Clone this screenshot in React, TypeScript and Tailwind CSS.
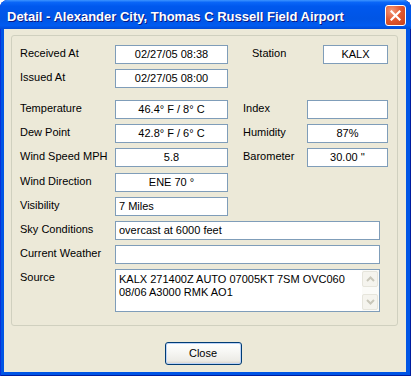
import React from 'react';

const rows = {
  font: "font-['Liberation_Sans',Arial,sans-serif]",
};

function Box({ className, children, left }: { className: string; children?: React.ReactNode; left?: boolean }) {
  return (
    <div
      className={`h-[19px] shrink-0 border border-[#7F9DB9] bg-white leading-[17px] whitespace-nowrap overflow-hidden ${
        left ? 'pl-[3px] text-left' : 'text-center'
      } ${className}`}
    >
      {children}
    </div>
  );
}

function Label({ className, children }: { className: string; children: React.ReactNode }) {
  return <div className={`shrink-0 pt-[2px] leading-[13px] whitespace-nowrap ${className}`}>{children}</div>;
}

function Chevron({ up }: { up?: boolean }) {
  return (
    <svg width="9" height="6" viewBox="0 0 9 6" className="block">
      <path
        d={up ? 'M1 5 L4.5 1.5 L8 5' : 'M1 1 L4.5 4.5 L8 1'}
        fill="none"
        stroke="#C9C7BA"
        strokeWidth="2"
      />
    </svg>
  );
}

export default function App() {
  return (
    <div
      className={`w-[411px] h-[376px] flex flex-col rounded-t-[8px] overflow-hidden bg-[#0055E5] text-[11px] text-black ${rows.font} shadow-[inset_1px_0_0_#0831D9,inset_-1px_0_0_#001EA0,inset_0_-1px_0_#001EA0]`}
    >
      {/* title bar */}
      <div className="h-[29px] shrink-0 flex items-start justify-between pl-[7px] pr-[5px] bg-[linear-gradient(180deg,#3D95FF_0%,#0A66F8_8%,#0058EE_22%,#0055E5_65%,#005BF0_88%,#004BD8_100%)]">
        <div className="pt-[9px] leading-[15px] text-[13px] font-bold text-white whitespace-nowrap [text-shadow:1px_1px_0_#0A1883]">
          Detail - Alexander City, Thomas C Russell Field Airport
        </div>
        <div className="mt-[5px] w-[21px] h-[21px] rounded-[3px] border border-white flex items-center justify-center bg-[radial-gradient(circle_at_30%_25%,#F29A7C_0%,#E25A32_45%,#C6401A_100%)]">
          <svg width="11" height="11" viewBox="0 0 11 11">
            <path d="M1.5 1.5 L9.5 9.5 M9.5 1.5 L1.5 9.5" stroke="white" strokeWidth="2.2" strokeLinecap="square" />
          </svg>
        </div>
      </div>

      {/* client area */}
      <div className="flex-1 ml-[4px] mr-[5px] mb-[4px] bg-[#ECE9D8] flex flex-col pl-[7px] pr-[8px] pt-[6px]">
        <div className="h-[291px] shrink-0 border border-[#D0D0BF] rounded-[3px] pl-[8px] pt-[9px] flex flex-col gap-[5px]">
          <div className="flex h-[19px]">
            <Label className="w-[95px]">Received At</Label>
            <Box className="w-[113px]">02/27/05 08:38</Box>
            <Label className="ml-[24px] w-[71px]">Station</Label>
            <Box className="w-[65px]">KALX</Box>
          </div>
          <div className="flex h-[19px]">
            <Label className="w-[95px]">Issued At</Label>
            <Box className="w-[113px]">02/27/05 08:00</Box>
          </div>

          <div className="flex h-[19px] mt-[7px]">
            <Label className="w-[95px]">Temperature</Label>
            <Box className="w-[113px]">46.4° F / 8° C</Box>
            <Label className="ml-[15px] w-[64px]">Index</Label>
            <Box className="w-[81px]" />
          </div>
          <div className="flex h-[19px]">
            <Label className="w-[95px]">Dew Point</Label>
            <Box className="w-[113px]">42.8° F / 6° C</Box>
            <Label className="ml-[15px] w-[64px]">Humidity</Label>
            <Box className="w-[81px]">87%</Box>
          </div>
          <div className="flex h-[19px]">
            <Label className="w-[95px]">Wind Speed MPH</Label>
            <Box className="w-[113px]">5.8</Box>
            <Label className="ml-[15px] w-[64px]">Barometer</Label>
            <Box className="w-[81px]">30.00 ''</Box>
          </div>
          <div className="flex h-[19px] mt-[1px]">
            <Label className="w-[95px]">Wind Direction</Label>
            <Box className="w-[113px]">ENE 70 °</Box>
          </div>
          <div className="flex h-[19px]">
            <Label className="w-[95px]">Visibility</Label>
            <Box className="w-[113px]" left>
              7 Miles
            </Box>
          </div>
          <div className="flex h-[19px]">
            <Label className="w-[95px]">Sky Conditions</Label>
            <Box className="w-[265px]" left>
              overcast at 6000 feet
            </Box>
          </div>
          <div className="flex h-[19px]">
            <Label className="w-[95px]">Current Weather</Label>
            <Box className="w-[265px]" />
          </div>
          <div className="flex h-[43px]">
            <Label className="w-[95px]">Source</Label>
            <div className="w-[265px] h-[43px] border border-[#7F9DB9] bg-white flex">
              <div className="flex-1 pl-[3px] pt-[3px] leading-[13px]">
                <div>KALX 271400Z AUTO 07005KT 7SM OVC060</div>
                <div>08/06 A3000 RMK AO1</div>
              </div>
              <div className="w-[17px] flex flex-col py-px pr-px bg-[#FBFBF8]">
                <div className="h-[16px] rounded-[2px] border border-[#E6E5DC] bg-[#F5F4EE] flex items-center justify-center">
                  <Chevron up />
                </div>
                <div className="flex-1" />
                <div className="h-[16px] rounded-[2px] border border-[#E6E5DC] bg-[#F5F4EE] flex items-center justify-center">
                  <Chevron />
                </div>
              </div>
            </div>
          </div>
        </div>

        <div className="mt-[16px] flex justify-center">
          <button className="mr-[3px] w-[77px] h-[23px] rounded-[3px] border border-[#003C74] bg-[linear-gradient(180deg,#FFFFFF_0%,#F7F7F4_40%,#ECEBE6_85%,#D6D0C5_100%)] shadow-[inset_0_0_0_1px_#BCD3F7] text-[11px] leading-[21px] text-black">
            Close
          </button>
        </div>
      </div>
    </div>
  );
}
